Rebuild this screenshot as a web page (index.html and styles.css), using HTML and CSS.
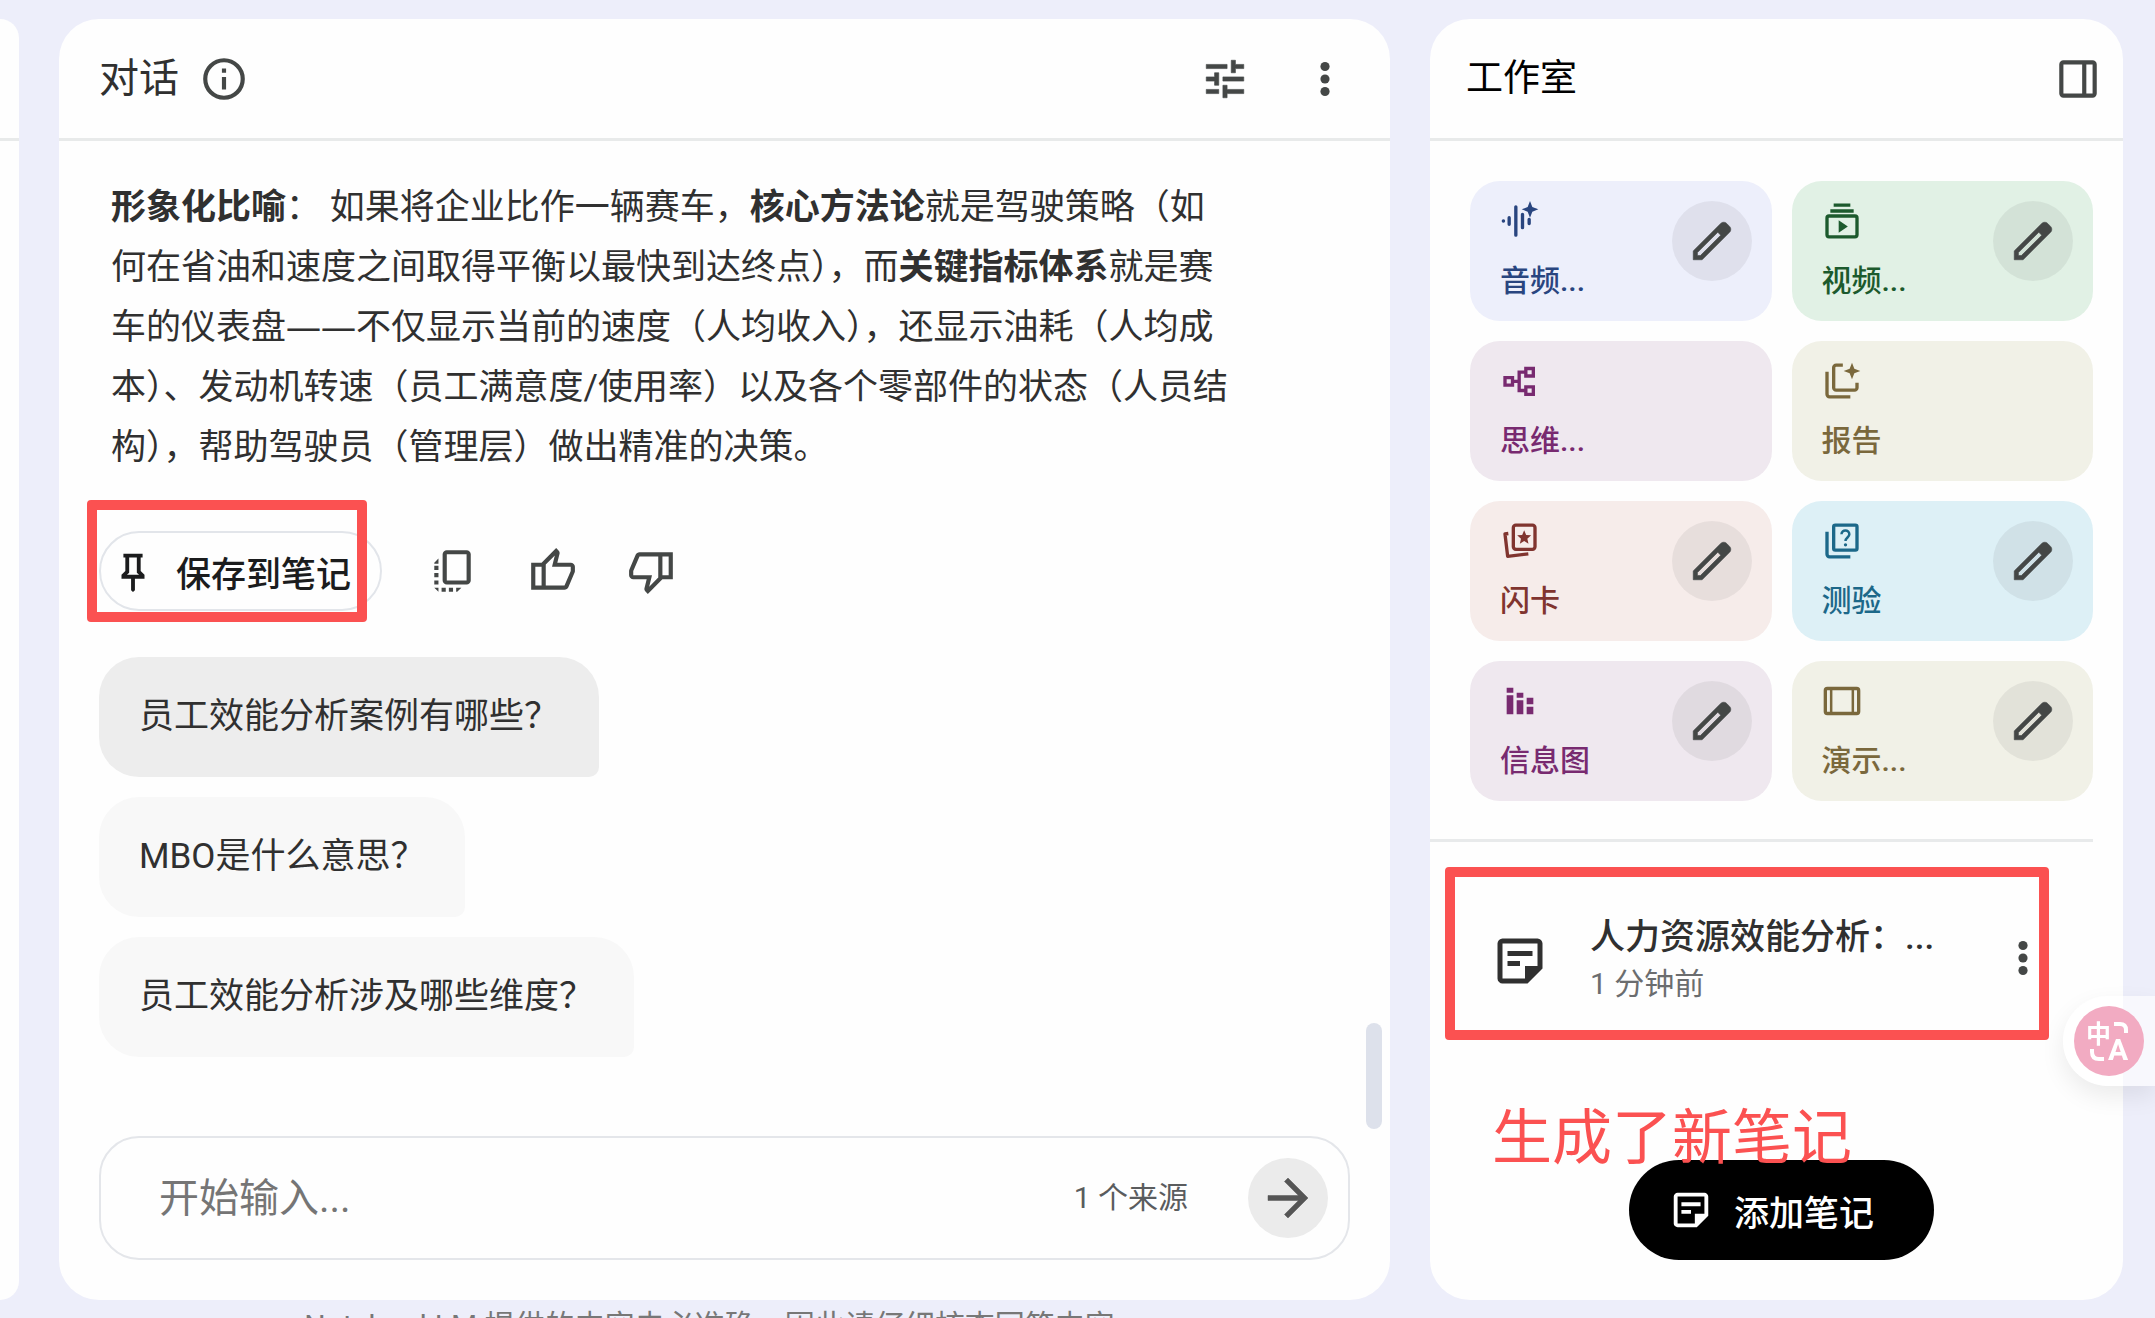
FILE: index.html
```html
<!DOCTYPE html>
<html lang="zh-CN">
	<head>
		<meta charset="UTF-8">
		<meta name="viewport" content="width=device-width, initial-scale=1">
		<title>NotebookLM</title>
		<link rel="stylesheet" href="styles.css">
	</head>
	<body>

		<!-- 图标 -->
		<svg class="icon-defs" aria-hidden="true">
			<symbol id="i-info" viewBox="0 0 24 24"><circle cx="12" cy="12" r="9" fill="none" stroke="currentColor" stroke-width="2"/><path d="M11 11h2v6h-2zM11 7h2v2h-2z"/></symbol>
			<symbol id="i-tune" viewBox="0 0 24 24"><path d="M3 17v2h6v-2H3zM3 5v2h10V5H3zm10 16v-2h8v-2h-8v-2h-2v6h2zM7 9v2H3v2h4v2h2V9H7zm14 4v-2H11v2h10zm-6-4h2V7h4V5h-4V3h-2v6z" stroke="currentColor" stroke-width=".3"/></symbol>
			<symbol id="i-more" viewBox="0 0 24 24"><circle cx="12" cy="6" r="2.200"/><circle cx="12" cy="12" r="2.200"/><circle cx="12" cy="18" r="2.200"/></symbol>
			<symbol id="i-panel" viewBox="0 0 24 24"><path d="M5 4h14a1 1 0 0 1 1 1v14a1 1 0 0 1-1 1H5a1 1 0 0 1-1-1V5a1 1 0 0 1 1-1zM15 4v16" fill="none" stroke="currentColor" stroke-width="2"/></symbol>
			<symbol id="i-pin" viewBox="0 -960 960 960"><path d="m640-480 80 80v80H520v240l-40 40-40-40v-240H240v-80l80-80v-280h-40v-80h400v80h-40v280Zm-286 80h252l-46-46v-314H400v314l-46 46Z"/></symbol>
			<symbol id="i-copy" viewBox="0 0 24 24"><rect x="8.500" y="3" width="11.500" height="14.500" rx="1" fill="none" stroke="currentColor" stroke-width="2"/><path d="M3.500 8l2-2v2.500h-2zM3.500 9.500h2v2h-2zM3.500 13h2v2h-2zM3.500 16.500h2v2h-2zM3.500 20h2v2zM7 20h2v2H7zM10.500 20h2v2h-2zM14 20h2.500l-2 2H14z"/></symbol>
			<symbol id="i-thumb" viewBox="0 -960 960 960"><path d="M720-120H280v-520l280-280 50 50q7 7 11.500 19t4.500 23v14l-44 174h258q32 0 56 24t24 56v80q0 7-2 15t-4 15L794-168q-9 20-30 34t-44 14Zm-360-80h360l120-280v-80H480l54-220-174 174v406Zm-80-440v80H160v360h120v80H80v-520h200Z"/></symbol>
			<symbol id="i-arrow" viewBox="0 0 24 24"><path d="M4 11h12.170l-5.590-5.590L12 4l8 8-8 8-1.410-1.410L16.170 13H4z" stroke="currentColor" stroke-width=".2"/></symbol>
			<symbol id="i-edit" viewBox="0 -960 960 960"><path d="M200-200h57l391-391-57-57-391 391v57Zm-80 80v-170l528-527q12-11 26.500-17t30.500-6q16 0 31 6t26 18l55 56q12 11 17.500 26t5.500 30q0 16-5.500 30.500T817-647L290-120H120Z" stroke="currentColor" stroke-width="12"/></symbol>
			<symbol id="i-note" viewBox="0 0 24 24"><path fill-rule="evenodd" d="M5 21q-.8 0-1.400-.6T3 19V5q0-.8.6-1.400T5 3h14q.8 0 1.400.6T21 5v10l-6 6H5zm0-2h9v-5h5V5H5v14zM7 14v-2h5v2H7zm0-4V8h10v2H7z"/></symbol>
			<symbol id="i-audio" viewBox="0 0 24 24"><path d="M2 12h.1M5.500 10v4M9.500 3.500v17M13.500 8v8M17.500 11v2.500" fill="none" stroke="currentColor" stroke-width="2" stroke-linecap="round"/><path d="M18 0l1.400 3.600L23 5l-3.600 1.400L18 10l-1.400-3.600L13 5l3.600-1.400z"/></symbol>
			<symbol id="i-video" viewBox="0 0 24 24"><path d="M7 1.500h10v2H7zM5 5h14v2H5z"/><rect x="3" y="9" width="18" height="12.500" rx="1.200" fill="none" stroke="currentColor" stroke-width="2"/><path d="M10 11.500v7.500l5.500-3.750z"/></symbol>
			<symbol id="i-mind" viewBox="0 0 24 24"><path d="M3 10h4.500v4.500H3zM15.500 4.500H20V9h-4.500zM15.500 15.500H20V20h-4.500zM7.500 12.200h4M15.500 6.700h-4v11h4" fill="none" stroke="currentColor" stroke-width="2"/></symbol>
			<symbol id="i-report" viewBox="0 0 24 24"><path d="M3 6.500V20a1.500 1.500 0 0 0 1.500 1.500H17M12.500 2.500H8.500A1.500 1.500 0 0 0 7 4v12a1.500 1.500 0 0 0 1.500 1.500h11A1.500 1.500 0 0 0 21 16v-3" fill="none" stroke="currentColor" stroke-width="2"/><path d="M18 1l1.400 3.600L23 6l-3.600 1.400L18 11l-1.400-3.600L13 6l3.600-1.400z"/></symbol>
			<symbol id="i-flash" viewBox="0 0 24 24"><rect x="8" y="2.500" width="13" height="14.500" rx="1.500" fill="none" stroke="currentColor" stroke-width="2"/><path d="M5 7.500l-2 .3 1.600 13.400L17 19.700" fill="none" stroke="currentColor" stroke-width="2" stroke-linejoin="round"/><path d="M14.500 5.500l1.200 2.900 3 .2-2.300 2 .7 3-2.600-1.600-2.600 1.600.7-3-2.300-2 3-.2z"/></symbol>
			<symbol id="i-quiz" viewBox="0 0 24 24"><rect x="7" y="2.500" width="14" height="15" rx="1" fill="none" stroke="currentColor" stroke-width="2"/><path d="M3 6.500V20a1.500 1.500 0 0 0 1.500 1.500H17" fill="none" stroke="currentColor" stroke-width="2"/><path d="M11.700 8c0-3 4.700-3 4.700 0 0 1.800-2.300 2-2.300 4" fill="none" stroke="currentColor" stroke-width="1.500"/><circle cx="14.100" cy="14.300" r="1"/></symbol>
			<symbol id="i-info-chart" viewBox="0 0 24 24"><path d="M4 4h4v3H4zM4 8.500h4V20H4zM10 7h4v3h-4zM10 11.500h4V20h-4zM16 10h4v4h-4zM16 15.500h4V20h-4z"/></symbol>
			<symbol id="i-slides" viewBox="0 0 24 24"><rect x="2" y="4.500" width="20" height="15" rx="1.200" fill="none" stroke="currentColor" stroke-width="2"/><path d="M5.500 4.500v15M18.500 4.500v15" fill="none" stroke="currentColor" stroke-width="1.500"/></symbol>
		</svg>

		<div class="app">
			<main class="panels">
				<section class="panel sources">
					<div class="panel-head"></div>
				</section>

				<!-- 对话 -->
				<section class="panel chat">
					<header class="panel-head">
						<h2 class="chat-title">对话</h2>
						<button class="icon-btn" type="button" aria-label="信息"><svg><use href="#i-info"/></svg></button>
						<div class="head-tools">
							<button class="icon-btn" type="button" aria-label="设置"><svg><use href="#i-tune"/></svg></button>
							<button class="icon-btn" type="button" aria-label="更多"><svg><use href="#i-more"/></svg></button>
						</div>
					</header>

					<div class="chat-body">
						<p class="answer"><strong>形象化比喻</strong>： 如果将企业比作一辆赛车，<strong>核心方法论</strong>就是驾驶策略（如何在省油和速度之间取得平衡以最快到达终点），而<strong>关键指标体系</strong>就是赛车的仪表盘<span class="dash">——</span>不仅显示当前的速度（人均收入），还显示油耗（人均成本）、发动机转速（员工满意度/使用率）以及各个零部件的状态（人员结构），帮助驾驶员（管理层）做出精准的决策。</p>

						<div class="actions">
							<div class="save-wrap">
								<button class="save-btn" type="button"><svg><use href="#i-pin"/></svg>保存到笔记</button>
								<div class="mark mark-save"></div>
							</div>
							<button class="icon-btn" type="button" aria-label="复制"><svg><use href="#i-copy"/></svg></button>
							<button class="icon-btn" type="button" aria-label="赞"><svg><use href="#i-thumb"/></svg></button>
							<button class="icon-btn flip" type="button" aria-label="踩"><svg><use href="#i-thumb"/></svg></button>
						</div>

						<div class="suggest">
							<button class="bubble active" type="button">员工效能分析案例有哪些？</button>
							<button class="bubble" type="button">MBO是什么意思？</button>
							<button class="bubble" type="button">员工效能分析涉及哪些维度？</button>
						</div>
						<div class="scroll-thumb"></div>
					</div>

					<form class="ask">
						<input class="ask-input" type="text" placeholder="开始输入..." aria-label="开始输入">
						<span class="ask-count">1 个来源</span>
						<button class="ask-send" type="button" aria-label="发送"><svg><use href="#i-arrow"/></svg></button>
					</form>
				</section>

				<!-- 工作室 -->
				<section class="panel studio">
					<header class="panel-head">
						<h2 class="studio-title">工作室</h2>
						<div class="head-tools">
							<button class="icon-btn" type="button" aria-label="收起"><svg><use href="#i-panel"/></svg></button>
						</div>
					</header>

					<div class="tiles">
						<div class="tile blue">
							<div class="tile-main"><svg><use href="#i-audio"/></svg><span>音频...</span></div>
							<button class="tile-edit" type="button" aria-label="编辑音频"><svg><use href="#i-edit"/></svg></button>
						</div>
						<div class="tile green">
							<div class="tile-main"><svg><use href="#i-video"/></svg><span>视频...</span></div>
							<button class="tile-edit" type="button" aria-label="编辑视频"><svg><use href="#i-edit"/></svg></button>
						</div>
						<div class="tile purple">
							<div class="tile-main"><svg><use href="#i-mind"/></svg><span>思维...</span></div>
						</div>
						<div class="tile olive">
							<div class="tile-main"><svg><use href="#i-report"/></svg><span>报告</span></div>
						</div>
						<div class="tile red">
							<div class="tile-main"><svg><use href="#i-flash"/></svg><span>闪卡</span></div>
							<button class="tile-edit" type="button" aria-label="编辑闪卡"><svg><use href="#i-edit"/></svg></button>
						</div>
						<div class="tile cyan">
							<div class="tile-main"><svg><use href="#i-quiz"/></svg><span>测验</span></div>
							<button class="tile-edit" type="button" aria-label="编辑测验"><svg><use href="#i-edit"/></svg></button>
						</div>
						<div class="tile purple">
							<div class="tile-main"><svg><use href="#i-info-chart"/></svg><span>信息图</span></div>
							<button class="tile-edit" type="button" aria-label="编辑信息图"><svg><use href="#i-edit"/></svg></button>
						</div>
						<div class="tile olive">
							<div class="tile-main"><svg><use href="#i-slides"/></svg><span>演示...</span></div>
							<button class="tile-edit" type="button" aria-label="编辑演示"><svg><use href="#i-edit"/></svg></button>
						</div>
					</div>

					<div class="notes">
						<div class="note">
							<svg class="note-icon"><use href="#i-note"/></svg>
							<div class="note-text">
								<h3>人力资源效能分析：...</h3>
								<p>1 分钟前</p>
							</div>
							<button class="icon-btn" type="button" aria-label="更多"><svg><use href="#i-more"/></svg></button>
							<div class="mark mark-note"></div>
						</div>
					</div>

					<div class="add-wrap">
						<button class="add-btn" type="button"><svg><use href="#i-note"/></svg>添加笔记</button>
						<span class="mark-text">生成了新笔记</span>
					</div>
				</section>
			</main>
			<footer class="foot">NotebookLM 提供的内容未必准确，因此请仔细核查回答内容。</footer>
		</div>

		<!-- 翻译悬浮按钮 -->
		<div class="translate">
			<button class="translate-btn" type="button" aria-label="翻译">
				<svg viewBox="0 0 70 70">
					<text x="12" y="37" font-size="25">中</text>
					<text x="34" y="54" font-size="30">A</text>
					<path d="M40 18h6q6 0 6 6v3M18 43v3q0 7 7 7h5" fill="none" stroke="#fff" stroke-width="4"/>
				</svg>
			</button>
		</div>
	</body>
</html>
```

FILE: styles.css
```css
* { box-sizing: border-box;}
body { margin: 0; background: #edeefa; color: #303030; overflow: hidden; font-family: Roboto, "Noto Sans CJK SC", sans-serif; font-size: 35px;}
h2, h3, p { margin: 0; font-weight: 400;}
button { margin: 0; padding: 0; border: 0; background: none; color: inherit; font: inherit; cursor: pointer;}
svg { display: block; fill: currentColor;}
.icon-defs { position: absolute; width: 0; height: 0;}

.app { display: flex; flex-direction: column; height: 100vh; padding-top: 19px;}
.panels {
	flex: 1; min-height: 0; padding-right: 32px;
	display: grid; gap: 40px;
	grid-template-columns: 19px minmax(0, 1331fr) minmax(0, 693fr);
}
.panel { display: flex; flex-direction: column; min-height: 0; background: #fefefe; border-radius: 40px;}
.sources { border-radius: 0 40px 40px 0;}
.foot { flex: none; height: 18px; padding: 6px 706px 0 0; text-align: center; font-size: 30px; line-height: 40px; color: #777; white-space: nowrap;}

.panel-head { flex: none; height: 122px; display: flex; align-items: center; border-bottom: 3px solid #e8eaea;}
.chat .panel-head { padding: 0 40px;}
.studio .panel-head { padding: 0 20px 0 36px;}
.chat-title { font-size: 40px; line-height: 60px; margin-right: 20px;}
.studio-title { font-size: 37px; line-height: 60px; color: #000;}
.head-tools { display: flex; gap: 50px; margin-left: auto;}
.icon-btn { width: 50px; height: 50px; flex: none; color: #444746;}
.icon-btn svg { width: 50px; height: 50px;}
.flip { transform: rotate(180deg);}

/* chat */
.chat-body { position: relative; flex: 1; padding: 37px 40px 0;}
.answer { max-width: 1132px; padding-left: 12px; line-height: 60px;}
.answer strong { font-weight: 700;}
.dash { font-family: "Open Sans", sans-serif; line-height: 1;}
.actions { display: flex; align-items: center; gap: 50px; margin-top: 53px;}
.save-wrap { position: relative; margin-right: -5px;}
.save-btn {
	display: flex; align-items: center; gap: 20px;
	height: 80px; padding: 0 29px 0 9px;
	border: 2px solid #e2e5ea; border-radius: 40px;
	color: #1b1c1d; font-family: "Noto Sans CJK SC", sans-serif; font-weight: 500;
}
.save-btn svg { width: 46px; height: 46px;}
.suggest { display: flex; flex-direction: column; align-items: flex-start; gap: 20px; margin-top: 46px;}
.bubble { height: 120px; padding: 0 40px; background: #f8f8f8; border-radius: 40px 40px 10px 40px; line-height: 60px;}
.bubble.active { background: #ededed;}
.scroll-thumb { position: absolute; right: 8px; bottom: 7px; width: 16px; height: 106px; border-radius: 8px; background: #dde1eb;}

.ask {
	display: flex; align-items: center; flex: none;
	height: 124px; margin: 0 40px 40px; padding: 0 20px 0 58px;
	border: 2px solid #e4e6ea; border-radius: 40px;
}
.ask-input { flex: 1; min-width: 0; padding: 0; border: 0; outline: 0; background: none; font: inherit; font-size: 40px;}
.ask-input::placeholder { color: #757575; opacity: 1;}
.ask-count { font-size: 30px; line-height: 40px; color: #5a5c5e;}
.ask-send { display: flex; align-items: center; justify-content: center; width: 80px; height: 80px; margin-left: 60px; border-radius: 50%; background: #ebebeb; color: #555;}
.ask-send svg { width: 60px; height: 60px;}

/* studio */
.tiles { display: grid; grid-template-columns: 1fr 1fr; gap: 20px; padding: 40px 30px 38px 40px;}
.tile { display: flex; justify-content: space-between; height: 140px; padding: 20px 20px 0 30px; border-radius: 30px;}
.tile-main { font-size: 30px; font-weight: 500; line-height: 40px;}
.tile-main svg { width: 40px; height: 40px; margin-bottom: 20px;}
.tile-edit { display: flex; align-items: center; justify-content: center; width: 80px; height: 80px; border-radius: 50%; background: rgba(0,0,0,.06); color: #444746;}
.tile-edit svg { width: 50px; height: 50px;}
.blue { background: #edeffb; color: #29457f;}
.green { background: #e1f1e5; color: #1c5a2d;}
.purple { background: #efe8ef; color: #782a70;}
.olive { background: #f1f1e7; color: #7a683c;}
.red { background: #f6ecea; color: #80342f;}
.cyan { background: #ddf0f6; color: #1c6889;}

.notes { margin-right: 30px; padding: 73px 0 0 40px; border-top: 3px solid #e8eaeb;}
.note { position: relative; display: flex; align-items: center; padding: 0 45px 0 20px;}
.note .icon-btn { margin-bottom: 6px;}
.note-icon { width: 60px; height: 60px; margin-right: 40px; flex: none; color: #303030;}
.note-text { flex: 1; min-width: 0; line-height: 46px;}
.note-text h3 { font-size: 35px; font-weight: 500; white-space: nowrap;}
.note-text p { font-size: 30px; color: #6b6d6f;}

.add-wrap { position: relative; align-self: center; margin: auto 0 40px 10px;}
.add-btn {
	display: flex; align-items: center; gap: 20px;
	height: 100px; padding: 0 60px 0 39px;
	border-radius: 50px; background: #000; color: #fff; font-family: "Noto Sans CJK SC", sans-serif; font-weight: 500;
}
.add-btn svg { width: 46px; height: 46px;}

/* red marks */
.mark { position: absolute; border: 10px solid #fb5151; border-radius: 4px; pointer-events: none;}
.mark-save { left: -12px; right: 15px; top: -31px; bottom: -11px;}
.mark-note { left: -25px; right: 44px; top: -48px; bottom: -33px;}
.mark-text { position: absolute; left: -137px; top: -51px; font-size: 60px; line-height: 60px; color: #fb5151; white-space: nowrap;}

.translate {
	position: fixed; right: 0; bottom: 232px; width: 92px; height: 90px; padding: 10px 0 0 11px;
	border-radius: 45px 0 0 45px; background: rgba(255,255,255,.6);
	box-shadow: 0 10px 24px rgba(0,0,0,.08);
}
.translate-btn { display: block; width: 70px; height: 70px; border-radius: 50%; background: #f2abc2;}
.translate-btn svg { width: 70px; height: 70px; fill: #fff; font-weight: 700;}
```
